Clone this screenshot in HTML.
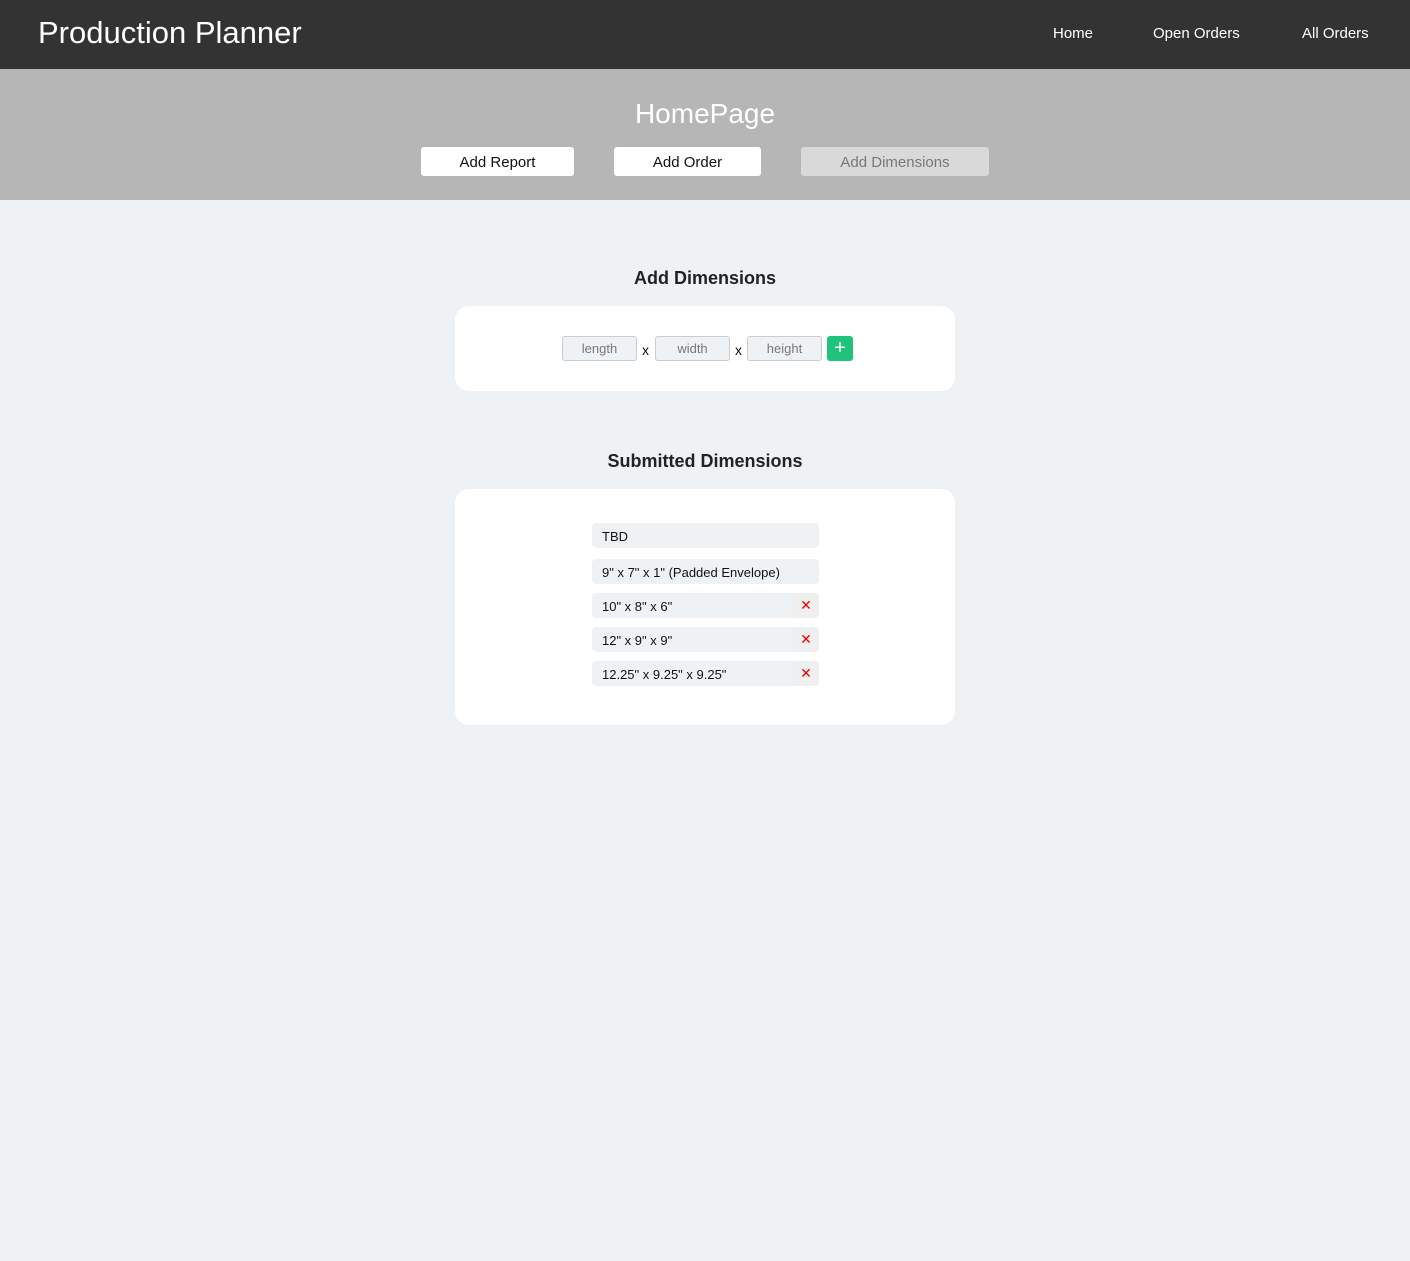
<!DOCTYPE html>
<html><head><style>
*{margin:0;padding:0;box-sizing:border-box}
body{width:1410px;height:1261px;background:#eff2f5;font-family:"Liberation Sans",sans-serif;position:relative;overflow:hidden}
.a{position:absolute}
.hdr{left:0;top:0;width:1410px;height:69px;background:#333}
.band{left:0;top:69px;width:1410px;height:131px;background:#b6b6b6}
.nav{color:#fff;font-size:15px;top:25px}
.btn{top:147px;height:29px;background:#fff;border-radius:3px;font-size:15px;text-align:center;line-height:31px;color:#111}
.card{background:#fff;border-radius:14px;left:455px;width:500px}
.h{width:1410px;left:0;text-align:center;font-weight:bold;font-size:18px;color:#222}
.inp{top:336px;width:75px;height:25px;background:#eff2f5;border:1px solid #ccc;border-radius:3px;color:#777;font-size:13px;text-align:center;line-height:23px}
.x{top:342px;font-size:14px;color:#111}
.row{left:592px;width:227px;height:25px;background:#eff2f5;border-radius:4px;font-size:13px;line-height:27px;padding-left:10px;color:#111}
.del{position:absolute;right:0;top:0;width:26px;height:25px;background:#efefef;border-radius:0 4px 4px 0;color:#e00;text-align:center;font-size:14px;line-height:24px}
</style></head><body>
<div class="a hdr"></div>
<div class="a" style="left:38px;top:15px;color:#fff;font-size:31px">Production Planner</div>
<div class="a nav" style="left:1053px">Home</div>
<div class="a nav" style="left:1153px">Open Orders</div>
<div class="a nav" style="left:1302px">All Orders</div>
<div class="a band"></div>
<div class="a" style="left:0;width:1410px;top:98px;text-align:center;color:#fff;font-size:28px">HomePage</div>
<div class="a btn" style="left:421px;width:153px">Add Report</div>
<div class="a btn" style="left:614px;width:147px">Add Order</div>
<div class="a btn" style="left:801px;width:188px;background:#d9d9d9;color:#777">Add Dimensions</div>
<div class="a h" style="top:268px">Add Dimensions</div>
<div class="a card" style="top:306px;height:85px"></div>
<div class="a inp" style="left:562px">length</div>
<div class="a x" style="left:642px">x</div>
<div class="a inp" style="left:655px">width</div>
<div class="a x" style="left:735px">x</div>
<div class="a inp" style="left:747px">height</div>
<div class="a" style="left:827px;top:336px;width:26px;height:25px;background:#1fc47a;border-radius:3px;color:#fff;text-align:center;font-size:20px;line-height:24px">+</div>
<div class="a h" style="top:451px">Submitted Dimensions</div>
<div class="a card" style="top:489px;height:236px"></div>
<div class="a row" style="top:523px">TBD</div>
<div class="a row" style="top:559px">9" x 7" x 1" (Padded Envelope)</div>
<div class="a row" style="top:593px">10" x 8" x 6"<span class="del">✕</span></div>
<div class="a row" style="top:627px">12" x 9" x 9"<span class="del">✕</span></div>
<div class="a row" style="top:661px">12.25" x 9.25" x 9.25"<span class="del">✕</span></div>
</body></html>
